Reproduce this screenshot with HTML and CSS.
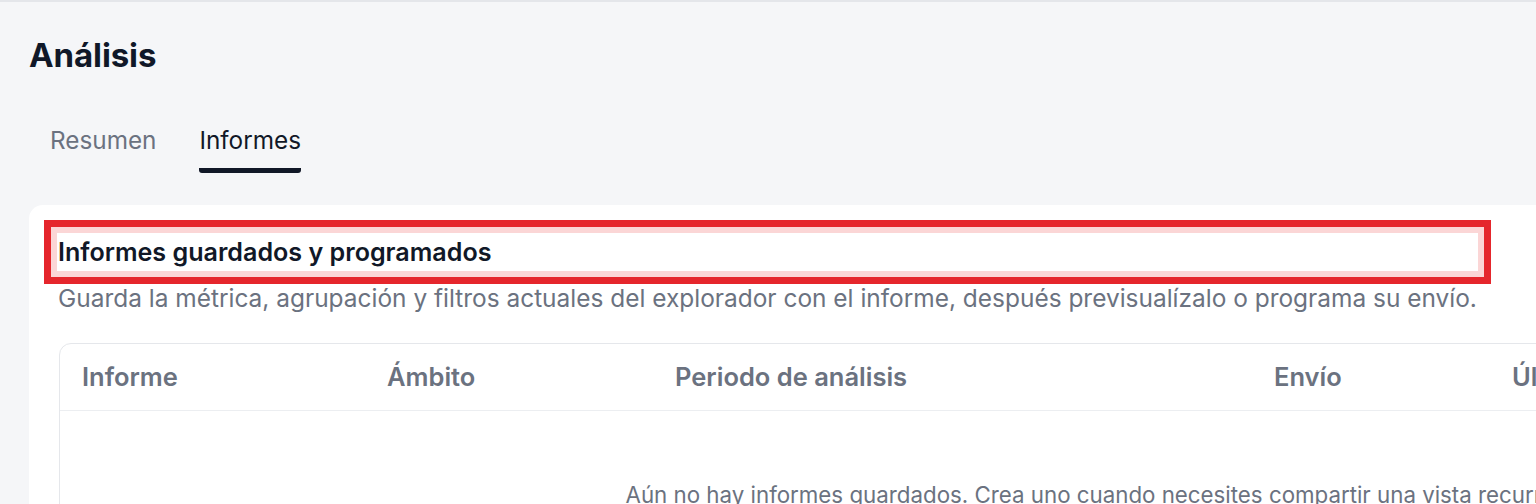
FILE: index.html
```html
<!DOCTYPE html>
<html lang="es">
<head>
<meta charset="utf-8">
<title>Análisis</title>
<link rel="stylesheet" href="styles.css">
</head>
<body>
<div class="page">
  <h1 class="title">Análisis</h1>
  <nav class="tabs">
    <a class="tab">Resumen</a>
    <a class="tab active">Informes</a>
  </nav>
  <section class="card">
    <h2 class="card-title">Informes guardados y programados</h2>
    <p class="card-sub">Guarda la métrica, agrupación y filtros actuales del explorador con el informe, después previsualízalo o programa su envío.</p>
    <div class="table-wrap">
      <table class="reports">
        <colgroup>
          <col class="c-name">
          <col class="c-scope">
          <col class="c-period">
          <col class="c-send">
          <col class="c-last">
          <col class="c-actions">
        </colgroup>
        <thead>
          <tr>
            <th>Informe</th>
            <th>Ámbito</th>
            <th>Periodo de análisis</th>
            <th>Envío</th>
            <th>Última ejecución</th>
            <th>Acciones</th>
          </tr>
        </thead>
        <tbody>
          <tr>
            <td class="empty" colspan="6">Aún no hay informes guardados. Crea uno cuando necesites compartir una vista recurrente.</td>
          </tr>
        </tbody>
      </table>
    </div>
  </section>
</div>
</body>
</html>
```
FILE: styles.css
```css
html, body {
  margin: 0;
  padding: 0;
  background: #f5f6f8;
  overflow: hidden;
}
body {
  font-family: Inter, "Noto Sans", "Liberation Sans", sans-serif;
  color: #111827;
  border-top: 2px solid #e4e6ea;
  width: max-content;
  min-width: 100vw;
}
.page {
  padding: 33px 0 40px 29px;
}
.title {
  margin: 0;
  font-size: 33px;
  line-height: 40px;
  font-weight: 700;
  letter-spacing: -0.1px;
  color: #101828;
}
.tabs {
  display: flex;
  gap: 43px;
  margin-top: 47px;
  padding-left: 21px;
}
.tab {
  font-size: 24.3px;
  line-height: 36px;
  color: #6b7280;
  padding-bottom: 10px;
  border-bottom: 5px solid transparent;
}
.tab.active {
  color: #111827;
  border-bottom-color: #111827;
  border-radius: 0 0 3px 3px;
}
.card {
  margin-top: 32px;
  background: #ffffff;
  border-radius: 14px;
  padding: 28px 28px 40px 28px;
  width: max-content;
}
.card-title {
  margin: 0;
  max-width: 1420px;
  font-size: 25.1px;
  line-height: 38px;
  font-weight: 600;
  color: #111827;
  outline: 6px solid #fbd6d6;
  box-shadow: 0 0 0 13px #e5262c;
  padding-left: 1px;
}
.card-sub {
  margin: 10px 0 0 0;
  max-width: 1440px;
  font-size: 24.45px;
  line-height: 34px;
  color: #6b7280;
  padding-left: 1px;
  white-space: nowrap;
}
.table-wrap {
  margin-top: 28px;
  margin-left: 2px;
  border: 1.5px solid #e5e7eb;
  border-radius: 12px;
  overflow: hidden;
}
.reports {
  border-collapse: collapse;
  table-layout: fixed;
  width: 2100px;
}
.c-name { width: 305px; }
.c-scope { width: 288px; }
.c-period { width: 599px; }
.c-send { width: 238px; }
.c-last { width: 360px; }
.c-actions { width: 310px; }
.reports th {
  text-align: left;
  font-size: 25.5px;
  line-height: 26px;
  font-weight: 600;
  color: #6b7280;
  padding: 20px 22px;
  border-bottom: 1.5px solid #eceef1;
  white-space: nowrap;
}
.reports td.empty {
  text-align: center;
  font-size: 22.3px;
  line-height: 30px;
  color: #6b7280;
  padding: 69px 22px;
}
```
